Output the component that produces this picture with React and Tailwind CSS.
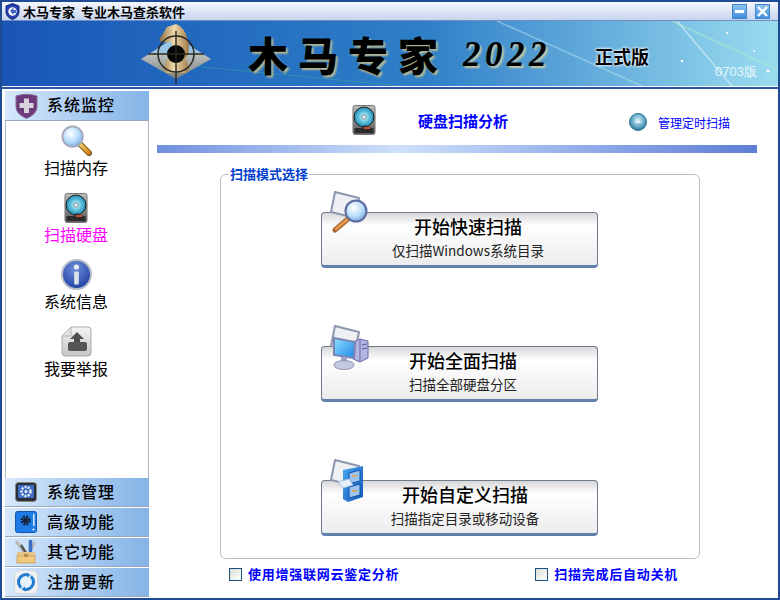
const CJK = "font-['Noto_Sans_CJK_SC','Liberation_Sans',sans-serif]";

function Defs() {
  return (
    <svg width="0" height="0" className="absolute">
      <defs>
        <radialGradient id="lens" cx="0.4" cy="0.35" r="0.7">
          <stop offset="0" stopColor="#ffffff" />
          <stop offset="0.6" stopColor="#b5dcfa" />
          <stop offset="1" stopColor="#6fa6e0" />
        </radialGradient>
        <linearGradient id="handle" x1="0" y1="0" x2="1" y2="1">
          <stop offset="0" stopColor="#f7cc6a" />
          <stop offset="1" stopColor="#d98a1c" />
        </linearGradient>
        <radialGradient id="platter" cx="0.5" cy="0.5" r="0.55">
          <stop offset="0" stopColor="#e8f8fc" />
          <stop offset="0.5" stopColor="#5cc0dc" />
          <stop offset="1" stopColor="#1a7ea8" />
        </radialGradient>
        <linearGradient id="case" x1="0" y1="0" x2="0" y2="1">
          <stop offset="0" stopColor="#bdbdbd" />
          <stop offset="1" stopColor="#5a5a5a" />
        </linearGradient>
        <radialGradient id="info" cx="0.45" cy="0.3" r="0.8">
          <stop offset="0" stopColor="#6d8fdc" />
          <stop offset="1" stopColor="#16349a" />
        </radialGradient>
        <linearGradient id="paper" x1="0" y1="0" x2="0" y2="1">
          <stop offset="0" stopColor="#f4f4f4" />
          <stop offset="1" stopColor="#c6c6c6" />
        </linearGradient>
        <linearGradient id="knight" x1="0" y1="0" x2="1" y2="0">
          <stop offset="0" stopColor="#8a6a3c" />
          <stop offset="0.5" stopColor="#f0d9aa" />
          <stop offset="1" stopColor="#a07c48" />
        </linearGradient>
        <linearGradient id="diamond" x1="0" y1="0" x2="0" y2="1">
          <stop offset="0" stopColor="#e8eef2" />
          <stop offset="1" stopColor="#7b7f78" />
        </linearGradient>
        <linearGradient id="screen" x1="0" y1="0" x2="1" y2="1">
          <stop offset="0" stopColor="#8fe0ff" />
          <stop offset="1" stopColor="#1d86e8" />
        </linearGradient>
        <linearGradient id="blue" x1="0" y1="0" x2="1" y2="1">
          <stop offset="0" stopColor="#4aa8f0" />
          <stop offset="1" stopColor="#1257b8" />
        </linearGradient>
        <radialGradient id="clock" cx="0.5" cy="0.4" r="0.6">
          <stop offset="0" stopColor="#d8f0f8" />
          <stop offset="0.55" stopColor="#6fb2cc" />
          <stop offset="1" stopColor="#2c6f92" />
        </radialGradient>
      </defs>
    </svg>
  );
}

const Magnifier = () => (
  <svg width="31" height="31" viewBox="0 0 32 32">
    <path d="M19 19 L29 29" stroke="#7b5a20" strokeWidth="6" strokeLinecap="round" />
    <path d="M19.5 19.5 L28.5 28.5" stroke="url(#handle)" strokeWidth="4" strokeLinecap="round" />
    <circle cx="12" cy="12" r="10.5" fill="url(#lens)" stroke="#a7a9bd" strokeWidth="2" />
  </svg>
);

const Disk = ({ w = 24, h = 30 }) => (
  <svg width={w} height={h} viewBox="0 0 24 30">
    <rect x="1" y="0.5" width="22" height="29" rx="2" fill="url(#case)" stroke="#777" />
    <circle cx="12" cy="12" r="10" fill="url(#platter)" stroke="#222" />
    <circle cx="12" cy="12" r="2.2" fill="#dfe7ea" stroke="#567" strokeWidth="0.6" />
    <rect x="2.5" y="23" width="19" height="5" rx="1" fill="#2a2a2a" />
    <path d="M22 24 L13 20 L9 23 L13 25 Z" fill="#333" />
    <rect x="12" y="22" width="6" height="2" fill="#c14a32" />
  </svg>
);

const Info = () => (
  <svg width="31" height="31" viewBox="0 0 31 31">
    <circle cx="15.5" cy="15.5" r="14.5" fill="url(#info)" stroke="#b6bcc8" strokeWidth="2" />
    <circle cx="15.5" cy="8" r="2.6" fill="#e8edf4" />
    <rect x="13.2" y="12.5" width="4.6" height="13" rx="1" fill="#dfe4ec" />
  </svg>
);

const Upload = () => (
  <svg width="31" height="31" viewBox="0 0 31 31">
    <path d="M10 1 H27 Q30 1 30 4 V27 Q30 30 27 30 H4 Q1 30 1 27 V10 Z" fill="url(#paper)" stroke="#a9a9a9" />
    <path d="M10 1 V10 H1 Z" fill="#e3e3e3" stroke="#b4b4b4" />
    <path d="M16 6 L23 13 H19 V17 H13 V13 H9 Z" fill="#4d4d4d" />
    <rect x="7" y="16" width="19" height="9" rx="2" fill="#555" />
  </svg>
);

const Mag2 = () => (
  <svg width="40" height="46" viewBox="0 0 40 46">
    <path d="M6 1 L30 7 L26 27 L2 21 Z" fill="#eef0f4" stroke="#8d96ae" strokeWidth="2" strokeLinejoin="round" />
    <path d="M20 27 L6 39" stroke="#a8622a" strokeWidth="5" strokeLinecap="round" />
    <path d="M20 27 L7 38" stroke="#e89a54" strokeWidth="2.5" strokeLinecap="round" />
    <circle cx="27" cy="20" r="10.5" fill="url(#lens)" stroke="#5f6aa0" strokeWidth="2" />
  </svg>
);

const Folder = () => (
  <path d="M6 1 L30 7 L26 27 L2 21 Z" fill="#eef0f4" stroke="#8d96ae" strokeWidth="2" strokeLinejoin="round" />
);

const Computer = () => (
  <svg width="40" height="46" viewBox="0 0 40 46">
    <Folder />
    <path d="M24 17 L31 14 L39 16 V33 L31 37 L24 34 Z" fill="#b4b4e0" stroke="#6a6aa8" />
    <path d="M31 14 V37" stroke="#6a6aa8" />
    <path d="M33 20 L38 19 M33 24 L38 23" stroke="#5a5a9c" />
    <path d="M5 13 L26 17 L25 33 L5 30 Z" fill="url(#screen)" stroke="#7c86b4" strokeWidth="2" />
    <rect x="12" y="32" width="6" height="7" fill="#9ea4c8" />
    <ellipse cx="15" cy="40" rx="10" ry="4.5" fill="#c5c9e0" stroke="#8b90b4" />
  </svg>
);

const Cabinet = () => (
  <svg width="40" height="46" viewBox="0 0 40 46">
    <Folder />
    <path d="M14 11 L34 7 V38 L19 43 L14 40 Z" fill="url(#blue)" />
    <path d="M20 14 L31 11 V22 L20 25 Z" fill="#9cc4ee" stroke="#0d4ea8" />
    <path d="M20 28 L31 25 V36 L20 39 Z" fill="#9cc4ee" stroke="#0d4ea8" />
    <rect x="23" y="16" width="5" height="1.6" fill="#e8a24a" />
    <rect x="23" y="31" width="5" height="1.6" fill="#e8a24a" />
    <path d="M9 23 L20 20 L24 26 L14 29 Z" fill="#e8f0fa" stroke="#a9bedc" />
  </svg>
);

const TitleShield = () => (
  <svg width="15" height="17" viewBox="0 0 15 17">
    <path d="M7.5 0.5 L14 3 V9 Q14 14 7.5 16.5 Q1 14 1 9 V3 Z" fill="#2440b0" stroke="#12247a" />
    <circle cx="7.5" cy="8.5" r="4.2" fill="#ffffff" />
    <path d="M5 8 L8.5 4.5 V7 H11 V10 H8.5 V12 Z" fill="#3c62c8" />
  </svg>
);

const PurpleShield = () => (
  <svg width="23" height="26" viewBox="0 0 23 26">
    <path d="M1 3 Q11.5 -0.5 22 3 V14 Q22 21 11.5 25.5 Q1 21 1 14 Z" fill="#6c3a78" stroke="#8c6a98" />
    <path d="M9 5.5 H14 V10 H18.5 V15 H14 V20 H9 V15 H4.5 V10 H9 Z" fill="#d8d2dc" />
  </svg>
);

const GearBox = () => (
  <svg width="22" height="20" viewBox="0 0 22 20">
    <rect x="0.5" y="0.5" width="21" height="19" rx="3" fill="#2b2f36" stroke="#888" />
    <rect x="3" y="3" width="16" height="13" fill="#3f6cc4" />
    <circle cx="11" cy="9.5" r="4.5" fill="none" stroke="#eef2fa" strokeWidth="2.4" strokeDasharray="2 1.2" />
    <circle cx="11" cy="9.5" r="1.5" fill="#eef2fa" />
  </svg>
);

const BlueGear = () => (
  <svg width="22" height="22" viewBox="0 0 22 22">
    <rect x="0.5" y="0.5" width="21" height="21" rx="2" fill="#1f7be8" stroke="#1557a8" />
    <rect x="18" y="3" width="1.6" height="12" fill="#cfe4fb" />
    <circle cx="10.5" cy="9.5" r="3.8" fill="none" stroke="#16243c" strokeWidth="2.6" strokeDasharray="2 1" />
    <circle cx="10.5" cy="9.5" r="2.6" fill="#16243c" />
    <circle cx="18.5" cy="18.5" r="1" fill="#fff" />
  </svg>
);

const Toolbox = () => (
  <svg width="26" height="24" viewBox="0 0 26 24">
    <path d="M3 1 L11 12 M22 2 L16 12" stroke="#b8bcc0" strokeWidth="3" />
    <path d="M17.5 0 V11" stroke="#3c6cc4" strokeWidth="3.5" strokeLinecap="round" />
    <path d="M8 5 L13 13" stroke="#555" strokeWidth="2.4" />
    <rect x="4" y="12" width="18" height="4" fill="#e6c48a" />
    <rect x="4" y="16" width="18" height="7" fill="#f0c97e" stroke="#d0a560" />
    <rect x="11" y="14" width="4" height="3" fill="#b98a4a" />
  </svg>
);

const Refresh = () => (
  <svg width="24" height="24" viewBox="0 0 24 24">
    <rect x="0.5" y="0.5" width="23" height="23" rx="5" fill="#eef0f2" stroke="#d8d8d8" />
    <circle cx="12" cy="12" r="7.5" fill="#e6f2fb" stroke="#1f7ad0" strokeWidth="3" />
    <path d="M14 2.5 L18 5 L15.5 8 L12.5 6 Z" fill="#eef0f2" />
    <path d="M10 21.5 L6 19 L8.5 16 L11.5 18 Z" fill="#eef0f2" />
    <path d="M13 2.5 L16.5 5 L13 7.5 Z" fill="#1f7ad0" />
    <path d="M11 21.5 L7.5 19 L11 16.5 Z" fill="#1f7ad0" />
  </svg>
);

const ClockBall = () => (
  <svg width="18" height="18" viewBox="0 0 18 18">
    <circle cx="9" cy="9" r="8.5" fill="url(#clock)" stroke="#2f7898" />
    <path d="M5 9 Q9 6 13 9 Q9 11 5 9" fill="#f0f8fa" opacity="0.8" />
  </svg>
);

const Logo = () => (
  <svg width="70" height="62" viewBox="0 0 70 62" className="shrink-0">
    <path d="M0 36 L35 14 L70 36 L35 56 Z" fill="url(#diamond)" />
    <path d="M35 14 L60 30 H10 Z" fill="#8fc2ea" opacity="0.8" />
    <path d="M18 17 L26 4 L35 1 Q44 4 47 18 Q50 30 44 36 Q50 44 46 50 H25 Q20 44 27 36 Q33 24 30 18 Q24 22 18 17 Z" fill="url(#knight)" />
    <circle cx="35" cy="31" r="18" fill="none" stroke="#2a2a22" strokeWidth="1.5" />
    <circle cx="35" cy="31" r="9" fill="#060606" />
    <path d="M7 31 H63 M35 8 V61" stroke="#2a2a22" strokeWidth="1.4" />
  </svg>
);

const Bar = ({ icon, label, h = "h-[30px]" }) => (
  <div className={`${h} flex items-center border-b border-[#9aa7b8] bg-gradient-to-r from-[#d6e8fc] to-[#84b3e6]`}>
    <div className="w-[42px] flex justify-center shrink-0">{icon}</div>
    <span className="pb-[3px] text-[16px] leading-none tracking-[1px] font-medium text-black">{label}</span>
  </div>
);

const SideItem = ({ icon, label, active }) => (
  <div className="h-[67px] flex flex-col items-center pr-[2px]">
    <div className="h-[31px] flex items-center justify-center">{icon}</div>
    <span className={`mt-[1px] text-[16px] leading-[20px] ${active ? "text-[#ff00ff]" : "text-black"}`}>{label}</span>
  </div>
);

const ScanButton = ({ icon, title, sub, pad }) => (
  <div className={`relative w-[277px] h-[56px] rounded-[4px] border border-[#6f7c8c] border-b-[3px] border-b-[#5f80ad] bg-gradient-to-b from-[#d8d8d8] via-white via-25% to-[#ececec] flex flex-col items-center pt-[1px] ${pad}`}>
    <div className="absolute -top-[22px] left-[7px]">{icon}</div>
    <span className="text-[18px] leading-[24px] font-medium text-black">{title}</span>
    <span className="mt-[2px] text-[13.5px] leading-[20px] text-[#222]">{sub}</span>
  </div>
);

const Check = ({ label, className = "" }) => (
  <div className={`flex items-center gap-[6px] ${className}`}>
    <div className="w-[13px] h-[13px] border border-[#1c5180] bg-gradient-to-br from-[#dcdcd7] to-white" />
    <span className="text-[13px] leading-[16px] tracking-[0.75px] font-bold text-[#0000ff]">{label}</span>
  </div>
);

const WinBtn = ({ children }) => (
  <div className="w-[15px] h-[15px] border border-[#3f83c8] bg-gradient-to-b from-[#8fc4f0] to-[#3f8fdc] flex items-center justify-center">
    {children}
  </div>
);

export default function App() {
  return (
    <div className={`w-[780px] h-[600px] flex flex-col bg-white border-t-2 border-l-2 border-b-2 border-r-2 border-[#1f4a94] ${CJK}`}>
      <Defs />
      <div className="h-[19px] shrink-0 flex items-center pl-[3px] pr-[8px] bg-gradient-to-b from-[#f4f7fe] to-[#c8d5ee] border-b border-[#6f8fc4]">
        <TitleShield />
        <span className="ml-[3px] text-[13px] font-bold leading-none text-black whitespace-pre">木马专家  专业木马查杀软件</span>
        <div className="ml-auto flex gap-[8px]">
          <WinBtn><div className="w-[9px] h-[3px] bg-white" /></WinBtn>
          <WinBtn>
            <svg width="11" height="11" viewBox="0 0 11 11"><path d="M1 1 L10 10 M10 1 L1 10" stroke="white" strokeWidth="2.4" /></svg>
          </WinBtn>
        </div>
      </div>

      <div className="relative h-[65px] shrink-0 flex items-center overflow-hidden bg-gradient-to-r from-[#1a55b6] via-[#2f80c8] via-55% to-[#9adcef]">
        <svg className="absolute inset-0" width="778" height="65">
          <path d="M190 45 L400 65" stroke="#3aa8a0" strokeWidth="1" opacity="0.5" />
          <path d="M495 0 L640 65" stroke="#b8e4f4" strokeWidth="1.5" opacity="0.5" />
          <path d="M670 0 L778 50" stroke="#a8ecd0" strokeWidth="2" opacity="0.5" />
          <path d="M675 0 L730 65" stroke="#e0f6fb" strokeWidth="1.5" opacity="0.6" />
          <circle cx="620" cy="32" r="1" fill="#fff" /><circle cx="680" cy="40" r="1.2" fill="#fff" />
          <circle cx="766" cy="50" r="1.5" fill="#fff" /><circle cx="725" cy="12" r="1" fill="#fff" />
          <circle cx="752" cy="30" r="1" fill="#fff" />
        </svg>
        <div className="relative ml-[139px] flex items-center w-full">
          <Logo />
          <span className="ml-[37px] text-[40px] leading-none tracking-[10px] font-black text-black whitespace-nowrap [text-shadow:2px_2px_2px_#b8b890]">木马专家</span>
          <span className="ml-[15px] mt-[1px] font-['Liberation_Serif',serif] italic font-bold text-[35px] leading-none tracking-[4.5px] text-black [text-shadow:2px_2px_2px_#c8c8a0]">2022</span>
          <span className="ml-[44px] mt-[4px] text-[18px] leading-none font-bold text-black [text-shadow:0_0_3px_#ffffff,0_0_3px_#ffffff]">正式版</span>
          <span className="ml-[66px] mt-[36px] text-[13px] leading-none font-['Liberation_Sans',sans-serif] text-white/80 whitespace-nowrap">0703版</span>
        </div>
      </div>

      <div className="h-[1px] shrink-0 bg-white" />
      <div className="h-[2px] shrink-0 bg-[#2a55a8]" />

      <div className="flex-1 flex min-h-0 pt-[2px]">
        <div className="w-[144px] ml-[3px] shrink-0 flex flex-col">
          <Bar icon={<PurpleShield />} label="系统监控" />
          <div className="flex-1 flex flex-col border-x border-[#b4b8bf] pt-[4px]">
            <SideItem icon={<Magnifier />} label="扫描内存" />
            <SideItem icon={<Disk />} label="扫描硬盘" active />
            <SideItem icon={<Info />} label="系统信息" />
            <SideItem icon={<Upload />} label="我要举报" />
          </div>
          <div className="flex flex-col gap-[1px] pb-[1px]">
            <Bar icon={<GearBox />} label="系统管理" h="h-[29px]" />
            <Bar icon={<BlueGear />} label="高级功能" h="h-[29px]" />
            <Bar icon={<Toolbox />} label="其它功能" h="h-[29px]" />
            <Bar icon={<Refresh />} label="注册更新" h="h-[29px]" />
          </div>
        </div>

        <div className="flex-1 min-w-0 flex flex-col pl-[8px]">
          <div className="h-[54px] shrink-0 flex items-center">
            <div className="ml-[195px] mt-[4px]"><Disk /></div>
            <span className="ml-[42px] mt-[4px] text-[15px] leading-none font-bold text-[#0000ff]">硬盘扫描分析</span>
            <div className="ml-[121px] mt-[8px]"><ClockBall /></div>
            <span className="ml-[11px] mt-[10px] text-[12px] leading-none text-[#0000ff]">管理定时扫描</span>
          </div>
          <div className="w-[600px] h-[8px] shrink-0 bg-gradient-to-r from-[#6f8fdc] via-[#d0e0fb] via-40% to-[#5e7dd6]" />
          <div className="relative ml-[63px] mt-[21px] w-[480px] h-[385px] shrink-0 border border-[#bcbcbc] rounded-[6px] flex flex-col items-center pt-[37px] pr-[2px] gap-[78px]">
            <span className="absolute -top-[9px] left-[8px] bg-white px-[1px] text-[13px] leading-[16px] font-bold text-[#0040d0]">扫描模式选择</span>
            <ScanButton icon={<Mag2 />} title="开始快速扫描" sub="仅扫描Windows系统目录" pad="pl-[18px]" />
            <ScanButton icon={<Computer />} title="开始全面扫描" sub="扫描全部硬盘分区" pad="pl-[8px]" />
            <ScanButton icon={<Cabinet />} title="开始自定义扫描" sub="扫描指定目录或移动设备" pad="pl-[12px]" />
          </div>
          <div className="flex mt-[7px] ml-[72px]">
            <Check label="使用增强联网云鉴定分析" />
            <Check label="扫描完成后自动关机" className="ml-[136px]" />
          </div>
        </div>
      </div>
    </div>
  );
}
